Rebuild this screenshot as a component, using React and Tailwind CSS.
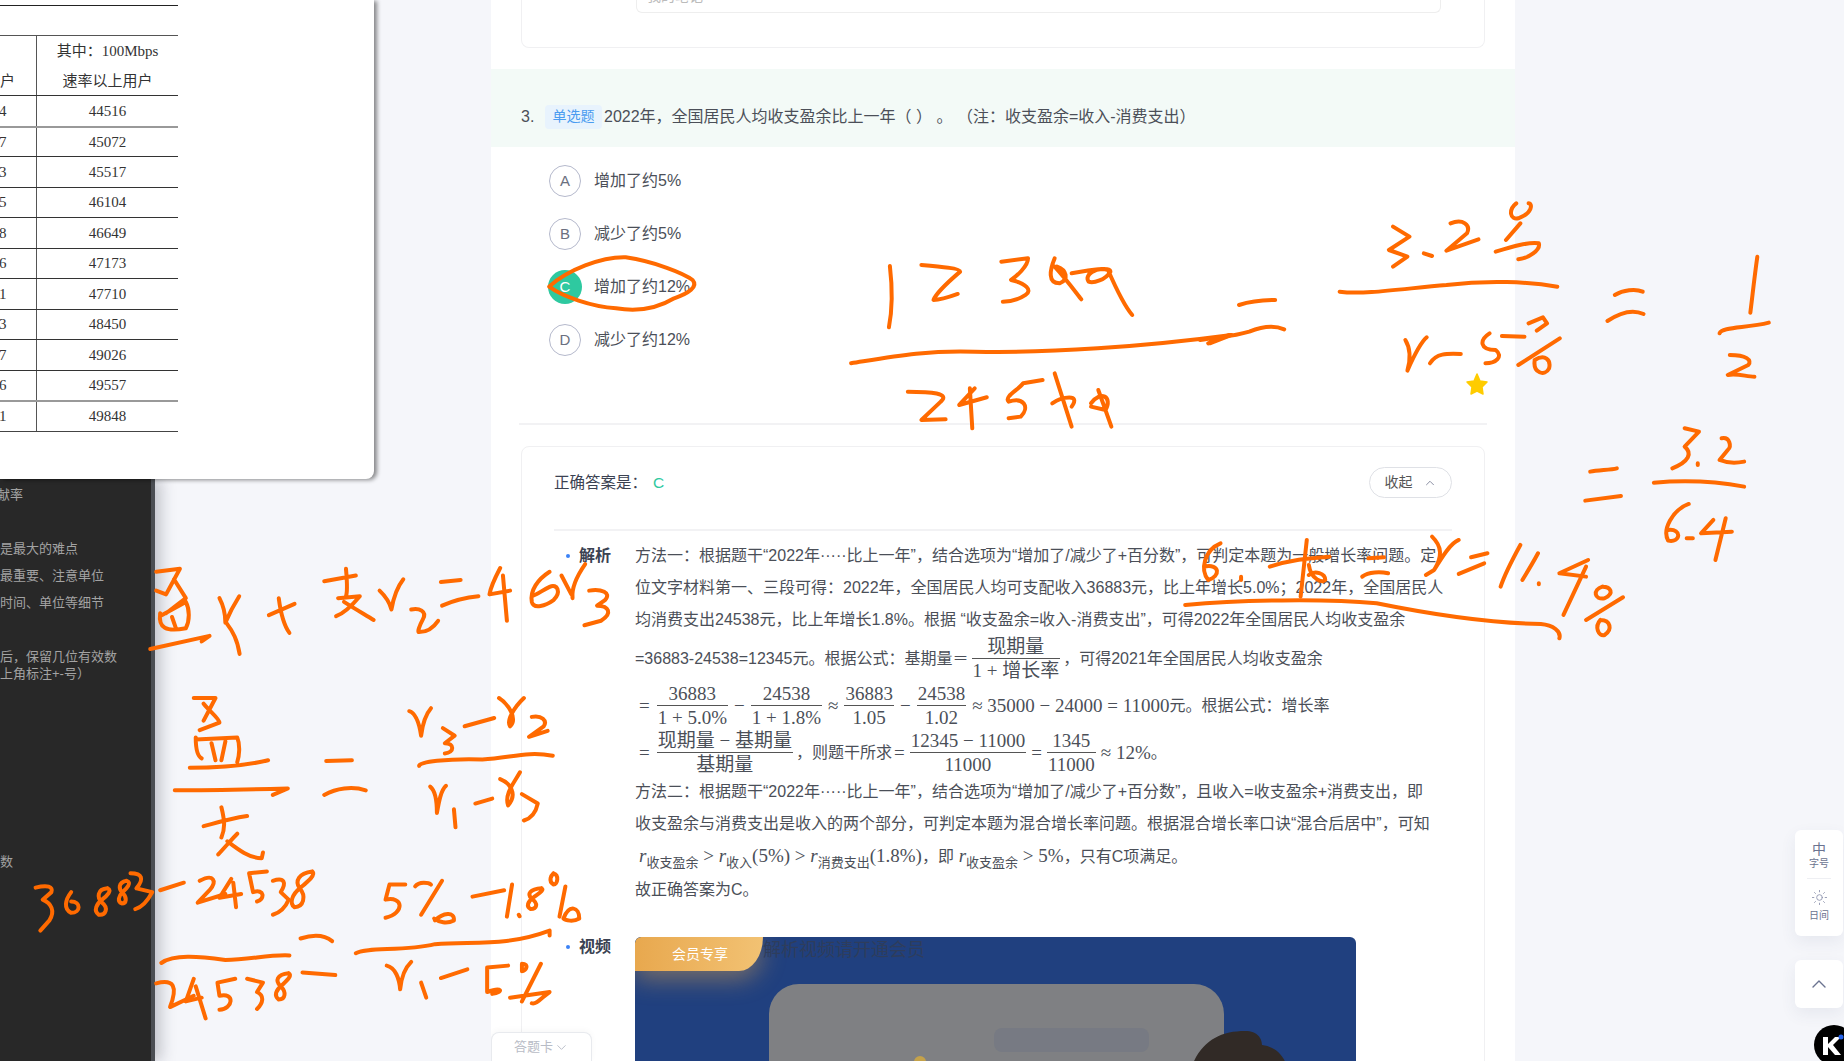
import React from 'react';
import { ChevronUp, ChevronDown, Sun } from 'lucide-react';

const tableRows = [
  ['4', '44516'],
  ['7', '45072'],
  ['3', '45517'],
  ['5', '46104'],
  ['8', '46649'],
  ['6', '47173'],
  ['1', '47710'],
  ['3', '48450'],
  ['7', '49026'],
  ['6', '49557'],
  ['1', '49848'],
];

const options = [
  { key: 'A', text: '增加了约5%' },
  { key: 'B', text: '减少了约5%' },
  { key: 'C', text: '增加了约12%', active: true },
  { key: 'D', text: '减少了约12%' },
];

// handwriting, each group is in the coordinates of the crop it was read from
const inkLeft = [
  'M395 270 L455 262 L420 330 L395 320 M440 290 L470 340 L420 380 M405 380 C400 420 420 430 470 420 C480 400 480 370 470 350 L410 385 M435 390 L445 420 M380 475 L530 440 L510 455',
  'M555 340 C570 370 570 390 570 405 C580 380 590 360 605 335 M572 405 C590 430 600 450 606 488',
  'M680 385 L745 355 M705 340 C710 380 720 415 732 432',
  'M820 295 L900 280 M875 262 C878 300 880 320 875 335 M855 340 L910 335 C890 360 870 380 850 388 M870 350 C900 370 925 385 945 398',
  'M960 320 C975 335 985 350 990 370 C995 340 1005 310 1020 290 M1040 370 C1060 365 1080 375 1070 395 C1060 415 1055 430 1060 430 C1080 430 1095 420 1108 400',
  'M1115 297 L1165 292 M1118 360 C1150 345 1180 338 1210 335',
  'M1265 260 C1250 290 1240 315 1238 330 L1290 320 M1272 280 L1282 400',
  'M1390 270 C1360 290 1340 320 1345 350 C1350 370 1380 360 1400 345 C1420 325 1410 300 1390 310 C1370 320 1360 330 1345 335',
  'M1420 280 L1445 330 M1480 250 C1460 280 1445 310 1448 340 M1490 320 C1520 315 1548 325 1530 345 L1510 360 C1540 360 1550 380 1520 400 L1478 412',
  'M490 605 L545 605 L515 665 M515 620 C530 640 555 660 555 670 L505 690 M495 710 C495 740 500 760 510 765 M495 715 L600 710 C608 730 605 760 600 775 M535 725 L545 770 M570 720 L560 770 M480 790 C540 790 620 785 678 770',
  'M442 850 C520 850 620 848 728 845 L690 862',
  'M515 945 C550 935 580 925 625 918 M560 895 C568 930 570 950 560 975 M552 1020 C570 1000 590 975 600 965 M575 985 C600 1005 630 1030 662 1030 L665 1015',
  'M825 772 L890 770 M820 862 C850 845 890 838 925 850',
  'M1035 640 C1050 645 1060 670 1065 705 C1068 680 1075 650 1090 632 M1120 685 L1150 705 L1125 725 C1150 725 1150 750 1125 752 M1175 680 L1250 658',
  'M1262 605 C1285 620 1310 660 1290 680 C1280 665 1300 630 1325 605 M1345 655 C1370 650 1385 665 1375 680 L1338 708 L1385 692',
  'M1060 785 C1058 775 1130 765 1220 768 C1290 765 1330 745 1398 758',
  'M1088 840 C1100 850 1105 880 1105 910 C1110 880 1115 850 1128 838 M1148 900 L1152 948 M1202 885 L1245 872',
  'M1265 820 C1290 830 1310 860 1285 890 C1275 860 1300 830 1315 802 M1320 860 L1360 885 C1355 910 1340 925 1325 930',
  'M90 1108 C120 1100 135 1105 130 1120 L108 1140 C130 1150 140 1170 125 1195 L102 1222',
  'M180 1120 C165 1140 160 1165 180 1175 C205 1175 205 1145 180 1145',
  'M272 1110 C245 1112 245 1135 258 1148 C275 1162 268 1182 250 1180 C235 1170 245 1150 258 1140 C270 1130 285 1115 272 1110',
  'M320 1090 C298 1095 300 1112 310 1122 C322 1135 320 1150 308 1150 C296 1145 300 1130 310 1120 C320 1110 335 1095 320 1090',
  'M330 1070 C360 1070 365 1085 345 1110 L385 1120 C375 1140 360 1160 342 1165',
  'M405 1115 L465 1095',
  'M505 1090 C540 1070 550 1090 530 1115 L500 1148 L570 1125',
  'M585 1085 L555 1135 L610 1125 M590 1095 L597 1160',
  'M675 1065 L630 1070 L640 1120 C670 1110 670 1140 650 1145',
  'M690 1090 C720 1080 725 1095 710 1120 L730 1140 C720 1165 705 1175 690 1180',
  'M790 1065 C755 1070 745 1090 758 1110 C775 1130 768 1160 745 1160 C730 1150 740 1125 758 1110 C775 1095 800 1075 790 1065',
  'M760 1243 C790 1233 820 1233 840 1250 M765 1333 L848 1340',
  'M408 1308 C440 1285 500 1290 570 1300 C630 1300 680 1285 732 1288',
  'M395 1362 C440 1350 450 1370 430 1425 L490 1395',
  'M490 1350 L470 1410 L510 1400 M495 1370 L520 1455',
  'M595 1350 L550 1360 L555 1395 C595 1385 590 1430 555 1432',
  'M625 1350 L665 1360 L650 1385 C670 1395 665 1415 650 1430',
  'M730 1335 C700 1338 695 1355 710 1370 C725 1385 722 1405 705 1405 C692 1395 698 1380 712 1368 C725 1355 740 1342 730 1335',
  'M1025 1100 L985 1100 L975 1140 C1020 1130 1025 1175 975 1188',
  'M1050 1105 C1060 1090 1085 1095 1090 1100 M1118 1090 L1065 1180 M1100 1195 C1120 1175 1150 1170 1148 1195 C1130 1205 1110 1200 1098 1190',
  'M1195 1132 L1275 1115 M1295 1100 L1282 1185 M1312 1180 L1314 1184',
  'M1370 1110 C1340 1112 1332 1125 1345 1138 C1362 1150 1358 1165 1342 1165 C1330 1158 1335 1145 1348 1135 C1360 1125 1378 1115 1370 1110',
  'M1400 1070 C1415 1075 1410 1100 1400 1100 C1385 1090 1395 1075 1400 1070 M1430 1105 L1415 1185 M1425 1190 C1440 1150 1465 1160 1465 1190 C1450 1200 1430 1195 1425 1190',
  'M900 1282 C930 1265 1020 1278 1100 1258 C1200 1250 1280 1265 1390 1222 L1390 1235',
  'M978 1315 C1000 1320 1010 1350 1012 1378 C1015 1345 1025 1320 1040 1305 M1065 1360 L1078 1400 M1115 1348 L1182 1325',
  'M1285 1315 L1232 1320 L1232 1385 C1270 1370 1275 1385 1245 1390',
  'M1320 1310 C1340 1310 1330 1330 1320 1330 Z M1368 1310 L1320 1410 M1290 1400 L1390 1385 C1370 1400 1355 1420 1345 1415',
];

const inkMiddle = [
  'M122 860 C160 810 230 770 280 772 C340 785 400 820 418 840 C430 860 410 880 380 895 C340 930 300 935 260 925 C210 920 150 890 122 860',
  'M825 798 C830 860 830 930 823 982',
  'M890 795 C930 800 970 805 970 815 C950 840 920 880 915 900 C930 900 950 890 965 882',
  'M1055 785 L1110 775 C1110 800 1085 830 1075 840 C1105 850 1120 870 1105 885 C1090 900 1070 905 1058 905',
  'M1165 775 C1155 810 1150 850 1175 850 C1195 840 1190 810 1170 800 M1165 800 C1190 840 1210 880 1220 898 M1200 820 C1240 810 1280 800 1280 815 C1270 840 1245 850 1235 845 C1225 825 1250 800 1275 810 C1290 860 1310 920 1325 945',
  'M745 1090 C830 1070 900 1050 1000 1055 C1150 1060 1350 1040 1530 1005 L1485 1030',
  'M862 1175 C910 1175 950 1180 930 1205 L890 1260 L940 1258',
  'M1000 1165 L968 1215 L1025 1192 M990 1165 L995 1285',
  'M1140 1140 L1100 1150 C1090 1170 1060 1190 1070 1205 C1100 1190 1115 1220 1095 1250 L1070 1255',
  'M1165 1120 L1200 1280 M1160 1210 C1180 1190 1220 1180 1200 1220',
  'M1240 1210 C1260 1170 1285 1190 1270 1230 L1240 1220 M1255 1170 L1282 1280',
];

const inkRight = [
  'M95 315 C120 305 160 300 183 300 M0 420 C50 410 80 410 120 395 C150 380 180 375 205 388 M20 430 L70 405',
  'M470 80 L510 110 L460 150 L505 170 L470 200 M545 160 L565 168 M610 70 C640 55 660 75 650 100 L600 152 L678 118',
  'M770 10 C750 30 755 60 775 55 C810 40 810 10 800 10 M780 70 L745 120 M720 155 C760 140 800 125 825 130 C830 150 800 175 775 178',
  'M340 275 C400 285 500 265 600 255 C700 240 800 245 870 260',
  'M500 420 C515 450 510 490 505 512 C520 470 535 430 552 412 M560 490 C575 460 600 460 635 462',
  'M735 408 L790 410 M705 400 C680 420 680 450 720 450 C740 470 720 490 695 490',
  'M800 370 L835 352 L845 370 L820 392 M876 415 L775 495 M815 480 C840 460 855 480 850 505 C840 530 810 520 815 480',
  'M1010 285 C1030 270 1060 265 1078 275 M992 363 C1020 340 1050 325 1080 342',
  'M1357 170 C1350 230 1345 290 1340 338 M1265 400 C1270 380 1330 385 1385 368',
  'M1290 465 C1330 465 1345 480 1335 495 L1285 525 C1310 520 1330 530 1350 530',
  'M950 815 C970 810 1000 810 1015 805 M938 902 L1025 888',
  'M1180 685 L1215 695 L1180 740 C1200 760 1190 785 1150 805 M1212 790 L1212 795',
  'M1270 715 C1290 710 1295 740 1285 750 L1265 780 C1285 790 1305 790 1325 785',
  'M1105 848 C1180 840 1260 845 1325 860',
  'M1190 912 C1150 930 1125 990 1140 1022 C1170 1030 1175 985 1140 990 M1185 1015 L1200 1015',
  'M1250 960 L1220 1000 L1295 995 M1280 955 L1255 1080',
  'M50 1030 C10 1050 0 1110 20 1140 C50 1130 50 1090 10 1100 M100 1130 L100 1140',
  'M260 1020 L245 1190 M170 1100 C220 1080 260 1075 315 1070 M265 1095 C270 1140 300 1150 305 1140 C305 1120 280 1110 265 1125',
  'M395 1130 C410 1115 440 1115 458 1120 M410 1075 L448 1072',
  'M565 1010 C590 1040 590 1070 570 1110 L550 1125 M570 1110 C590 1070 610 1030 630 1020',
  'M660 1072 L700 1060 M630 1122 L692 1090',
  'M780 1035 C760 1080 740 1130 732 1160 M823 1060 C810 1090 795 1120 785 1140 M825 1150 L825 1153',
  'M945 1080 L875 1120 L940 1130 M940 1100 L885 1245',
  'M980 1160 C955 1170 960 1200 985 1195 C1010 1180 1000 1160 980 1160 M1030 1192 L940 1260 M975 1260 C960 1280 970 1310 985 1305 C1005 1290 1000 1260 975 1260',
  'M-36 1215 C100 1200 300 1195 430 1210 C550 1240 700 1270 830 1272 C860 1275 880 1295 875 1315',
];

const InkGroup = ({ transform, paths }) => (
  <g transform={transform}>
    {paths.map((d, i) => (
      <path
        key={i}
        d={d}
        fill="none"
        stroke="#ff6a00"
        strokeWidth="4"
        strokeLinecap="round"
        strokeLinejoin="round"
        vectorEffect="non-scaling-stroke"
      />
    ))}
  </g>
);

const Frac = ({ top, bottom }) => (
  <span className="inline-flex flex-col items-stretch text-center align-middle mx-[3px] font-['Liberation_Serif','Noto_Sans_CJK_SC',serif] text-[19px] leading-[23px]">
    <span className="px-[1px] border-b border-[#555]">{top}</span>
    <span className="px-[1px]">{bottom}</span>
  </span>
);

const MathText = ({ children }) => (
  <span className="font-['Liberation_Serif','Noto_Sans_CJK_SC',serif] text-[19px]">{children}</span>
);

const Sub = ({ children }) => (
  <span className="text-[13px] relative top-[5px]">{children}</span>
);

const DocWindow = () => (
  <div className="w-[374px] h-[479px] bg-white rounded-br-lg shadow-[3px_1px_4px_rgba(0,0,0,0.45)] relative z-10 overflow-hidden font-['Liberation_Serif','Noto_Sans_CJK_SC',serif] text-[15px] text-[#333]">
    <div className="w-[178px] pt-[5px]">
      <div className="border-t border-[#222] h-[30px]" />
      <div className="border-t border-[#555] flex h-[60px]">
        <div className="w-[37px] border-r border-[#555] pt-[30px] pr-[21px] text-right leading-[30px] whitespace-nowrap">户</div>
        <div className="flex-1 text-center leading-[30px]">
          <div>其中：100Mbps</div>
          <div>速率以上用户</div>
        </div>
      </div>
      {tableRows.map(([left, right], i) => (
        <div
          key={right}
          className={`flex h-[30.55px] border-t items-center ${i === 1 || i === 10 ? 'border-t-2 border-[#999]' : 'border-[#333]'}`}
        >
          <div className="w-[37px] h-full border-r border-[#555] flex items-center">
            <span className="-ml-[1px]">{left}</span>
          </div>
          <div className="flex-1 text-center">{right}</div>
        </div>
      ))}
      <div className="border-t border-[#444]" />
    </div>
  </div>
);

const DarkPanel = () => (
  <div className="w-[155px] flex-1 bg-[#282828] border-r-[4px] border-[#4b4e53] shadow-[6px_0_14px_rgba(40,44,60,0.25)] text-[13px] leading-[17px] text-[#a3a3a3] whitespace-nowrap overflow-hidden">
    <div className="mt-[7px] -ml-[3px]">献率</div>
    <div className="mt-[37px]">是最大的难点</div>
    <div className="mt-[10px]">最重要、注意单位</div>
    <div className="mt-[10px]">时间、单位等细节</div>
    <div className="mt-[37px]">后，保留几位有效数</div>
    <div>上角标注+-号）</div>
    <div className="mt-[171px]">数</div>
  </div>
);

const Analysis = () => (
  <div className="flex pl-[32px] pt-[9px]">
    <div className="w-[81px] shrink-0 flex items-center h-[32px] pl-[12px] font-bold text-[16px] text-[#3b4252]">
      <span className="w-[4px] h-[4px] rounded-full bg-[#3b82f6] mr-[9px]" />
      解析
    </div>
    <div className="w-[820px] text-[16px] leading-[32px] text-[#4b4f58]">
      <div className="whitespace-nowrap">方法一：根据题干“2022年·····比上一年”，结合选项为“增加了/减少了+百分数”，可判定本题为一般增长率问题。定</div>
      <div className="whitespace-nowrap">位文字材料第一、三段可得：2022年，全国居民人均可支配收入36883元，比上年增长5.0%；2022年，全国居民人</div>
      <div className="whitespace-nowrap">均消费支出24538元，比上年增长1.8%。根据 “收支盈余=收入-消费支出”，可得2022年全国居民人均收支盈余</div>
      <div className="h-[47px] -mt-[1px] flex items-center whitespace-nowrap">
        =36883-24538=12345元。根据公式：基期量＝
        <Frac top="现期量" bottom="1 + 增长率" />
        ，可得2021年全国居民人均收支盈余
      </div>
      <div className="h-[47px] flex items-center whitespace-nowrap">
        <MathText>
          <span className="mx-[4px]">=</span>
        </MathText>
        <Frac top="36883" bottom="1 + 5.0%" />
        <MathText>
          <span className="mx-[3px]">−</span>
        </MathText>
        <Frac top="24538" bottom="1 + 1.8%" />
        <MathText>
          <span className="mx-[3px]">≈</span>
        </MathText>
        <Frac top="36883" bottom="1.05" />
        <MathText>
          <span className="mx-[3px]">−</span>
        </MathText>
        <Frac top="24538" bottom="1.02" />
        <MathText>
          <span className="ml-[3px]">≈ 35000 − 24000 = 11000</span>
        </MathText>
        元。根据公式：增长率
      </div>
      <div className="h-[47px] flex items-center whitespace-nowrap">
        <MathText>
          <span className="mx-[4px]">=</span>
        </MathText>
        <Frac top="现期量 − 基期量" bottom="基期量" />
        ，则题干所求
        <MathText>
          <span className="mx-[2px]">=</span>
        </MathText>
        <Frac top="12345 − 11000" bottom="11000" />
        <MathText>
          <span className="mx-[2px]">=</span>
        </MathText>
        <Frac top="1345" bottom="11000" />
        <MathText>
          <span className="ml-[2px]">≈ 12%</span>
        </MathText>
        。
      </div>
      <div className="whitespace-nowrap">方法二：根据题干“2022年·····比上一年”，结合选项为“增加了/减少了+百分数”，且收入=收支盈余+消费支出，即</div>
      <div className="whitespace-nowrap">收支盈余与消费支出是收入的两个部分，可判定本题为混合增长率问题。根据混合增长率口诀“混合后居中”，可知</div>
      <div className="whitespace-nowrap pl-[4px]">
        <MathText>
          <i>r</i><Sub>收支盈余</Sub> &gt; <i>r</i><Sub>收入</Sub>(5%) &gt; <i>r</i><Sub>消费支出</Sub>(1.8%)
        </MathText>
        ，即
        <MathText>
          {' '}<i>r</i><Sub>收支盈余</Sub> &gt; 5%
        </MathText>
        ，只有C项满足。
      </div>
      <div className="whitespace-nowrap">故正确答案为C。</div>
    </div>
  </div>
);

const VideoRow = () => (
  <div className="flex pl-[32px] mt-[31px]">
    <div className="w-[81px] shrink-0 flex items-center h-[20px] pl-[12px] font-bold text-[16px] text-[#3b4252]">
      <span className="w-[4px] h-[4px] rounded-full bg-[#3b82f6] mr-[9px]" />
      视频
    </div>
    <div className="w-[721px] h-[200px] rounded-t-md bg-[#20407f] relative overflow-hidden">
      <div className="flex items-start">
        <div className="w-[128px] h-[34px] rounded-tl-md [border-bottom-right-radius:24px_34px] bg-gradient-to-r from-[#e8a84e] to-[#f2c273] shadow-[0_8px_24px_rgba(232,168,78,0.45)] flex items-center justify-center text-white text-[14px] pl-[2px]">
          会员专享
        </div>
        <div className="text-[18px] leading-[26px] text-[#2e3d5c] whitespace-nowrap">解析视频请开通会员</div>
      </div>
      <div className="ml-[134px] mt-[13px] w-[455px] h-[160px] rounded-t-[30px] bg-[#7f8083] pt-[44px] pl-[225px]">
        <div className="w-[155px] h-[24px] rounded-lg bg-[#777a83]" />
      </div>
      <svg className="absolute left-[555px] top-[94px]" width="100" height="40" viewBox="0 0 100 40">
        <path d="M0 40 C10 10 30 0 55 0 C68 0 72 8 72 14 C88 16 96 28 98 40 Z" fill="#312a26" />
      </svg>
      <div className="absolute left-[279px] top-[119px] w-[12px] h-[8px] rounded-t-full bg-[#c5a24a]" />
    </div>
  </div>
);

const MainColumn = () => (
  <div className="w-[1024px] shrink-0 bg-white relative text-[#4b4f58] h-[1061px] overflow-hidden">
    <div className="mx-[30px] h-[48px] border border-t-0 border-[#f0f0f2] rounded-b-lg">
      <div className="ml-[114px] mr-[43px] h-[13px] border border-t-0 border-[#eeeeee] rounded-b-md overflow-hidden">
        <div className="-mt-[11px] pl-[10px] text-[14px] leading-[14px] text-[#bbb]">我的笔记</div>
      </div>
    </div>

    <div className="mt-[21px] h-[78px] bg-[#f3faf7] pt-[17px] pl-[30px] flex items-center text-[16px]">
      <span className="w-[24px]">3.</span>
      <span className="h-[24px] w-[57px] rounded bg-[#e8f3fd] text-[#4a9cf0] text-[14px] flex items-center justify-center mr-[2px]">单选题</span>
      <span className="whitespace-pre text-[16px]">2022年，全国居民人均收支盈余比上一年（ ） 。 （注：收支盈余=收入-消费支出）</span>
    </div>

    <div className="mt-[18px] pl-[58px] flex flex-col gap-[21px]">
      {options.map((opt) => (
        <div key={opt.key} className="flex items-center h-[32px]">
          <span
            className={
              opt.active
                ? 'w-[34px] h-[34px] -ml-[1px] mr-[12px] rounded-full bg-[#2ec9a0] text-white flex items-center justify-center text-[15px]'
                : 'w-[32px] h-[32px] mr-[13px] rounded-full border border-[#b5b9cc] text-[#6b7080] flex items-center justify-center text-[15px]'
            }
          >
            {opt.key}
          </span>
          <span className="text-[16px]">{opt.text}</span>
        </div>
      ))}
    </div>

    <div className="mt-[67px] mx-[28px] h-[2px] bg-[#f2f2f4]" />

    <div className="mt-[21px] mx-[30px] border border-[#f0f0f2] rounded-lg">
      <div className="pt-[20px] px-[32px] flex items-center justify-between h-[51px]">
        <div className="text-[15.5px] text-[#3b4252]">
          正确答案是：<span className="ml-[6px] text-[#2ec9a0]">C</span>
        </div>
        <div className="w-[83px] h-[31px] border border-[#dfe1e6] rounded-full flex items-center justify-center gap-[10px] text-[14px] text-[#555]">
          收起
          <ChevronUp size={14} strokeWidth={1.5} className="text-[#7a7f96]" />
        </div>
      </div>
      <div className="mt-[31px] mx-[32px] h-[2px] bg-[#f2f2f4]" />
      <Analysis />
      <VideoRow />
    </div>

    <div className="absolute left-0 bottom-0 w-[101px] h-[29px] bg-white border border-b-0 border-[#e8eaee] rounded-t-lg flex items-center justify-center gap-[1px] text-[13px] text-[#b8bcc6] shadow-[0_-2px_6px_rgba(0,0,0,0.03)]">
      答题卡
      <ChevronDown size={15} strokeWidth={1.5} />
    </div>
  </div>
);

const RightRail = () => (
  <div className="flex-1 pl-[280px] pt-[830px] overflow-hidden">
    <div className="w-[48px] h-[106px] bg-white rounded-md shadow-[0_6px_16px_rgba(70,80,120,0.08)] flex flex-col items-center text-[#6b7390]">
      <div className="mt-[11px] text-[14px] leading-[16px]">中</div>
      <div className="text-[10px] leading-[14px]">字号</div>
      <div className="mt-[7px] w-[24px] h-[1px] bg-[#eeeff3]" />
      <Sun size={17} strokeWidth={1.2} className="mt-[10px] text-[#8a90ab]" />
      <div className="mt-[3px] text-[10px] leading-[14px]">日间</div>
    </div>
    <div className="mt-[24px] w-[48px] h-[48px] bg-white rounded-md shadow-[0_6px_16px_rgba(70,80,120,0.08)] flex items-center justify-center">
      <ChevronUp size={24} strokeWidth={1.4} className="text-[#6b7390]" />
    </div>
    <svg className="mt-[17px] ml-[19px] block overflow-visible" width="40" height="40" viewBox="0 0 40 40">
      <circle cx="20" cy="20" r="20" fill="#000" />
      <path d="M9 12 H14 V19 L21 12 H27 L19 20 L27 30 H21 L14 22 V30 H9 Z" fill="#fff" />
      <circle cx="27" cy="12" r="2.5" fill="#2563eb" />
    </svg>
  </div>
);

const App = () => {
  return (
    <div className="relative w-[1844px] h-[1061px] overflow-hidden flex bg-[#f5f6fa] font-['Liberation_Sans','Noto_Sans_CJK_SC',sans-serif] text-[15px]">
      <div className="w-[491px] shrink-0 flex flex-col h-[1061px]">
        <DocWindow />
        <DarkPanel />
      </div>
      <MainColumn />
      <RightRail />

      {/* writing on top of the page */}
      <svg className="absolute inset-0 z-20 pointer-events-none" width="1844" height="1061" viewBox="0 0 1844 1061">
        <InkGroup transform="translate(0 470) scale(0.3954 0.3769)" paths={inkLeft} />
        <InkGroup transform="translate(490 0) scale(0.4847 0.3333)" paths={inkMiddle} />
        <InkGroup transform="translate(1200 200) scale(0.4107 0.3333)" paths={inkRight} />
        <path d="M1477 374 L1480 381 L1487 382 L1482 387 L1483 394 L1477 391 L1471 394 L1472 387 L1467 382 L1474 381 Z" fill="#ffcc00" stroke="#ffcc00" strokeWidth="1.5" strokeLinejoin="round" />
      </svg>
    </div>
  );
};

export default App;
